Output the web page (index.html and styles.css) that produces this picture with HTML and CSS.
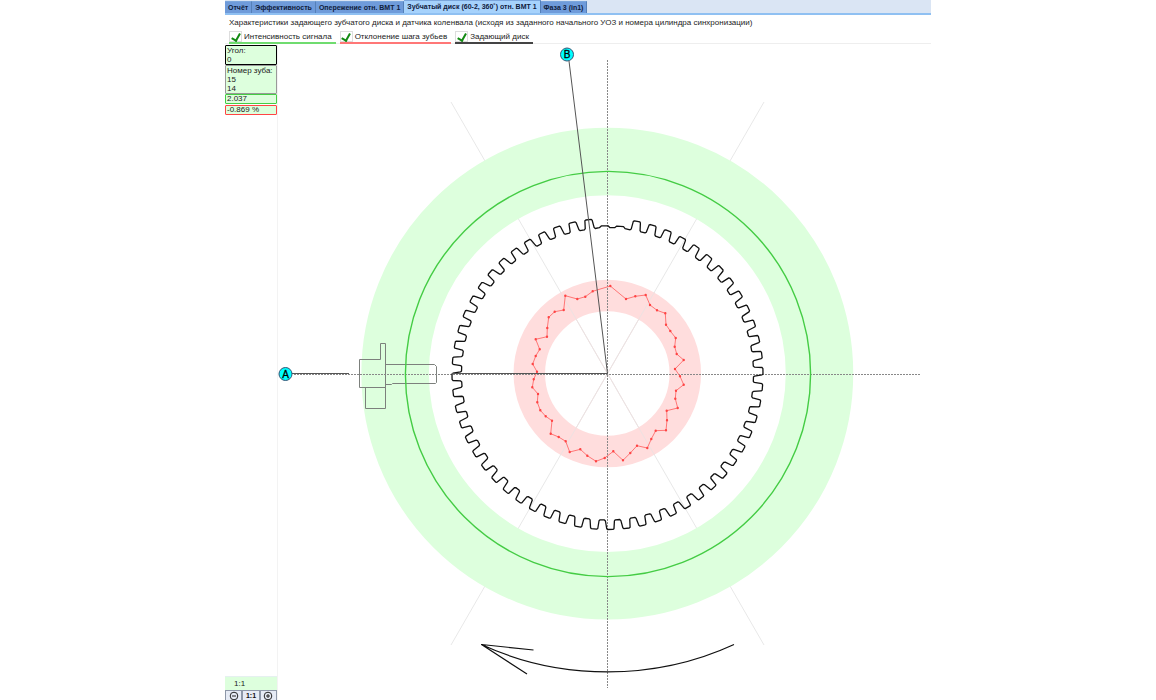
FILE: index.html
```html
<!DOCTYPE html>
<html lang="ru">
<head>
<meta charset="utf-8">
<title>Зубчатый диск</title>
<link rel="stylesheet" href="styles.css">
</head>
<body>
<main class="app">
  <nav class="tabs">
    <button class="tab" type="button">Отчёт</button>
    <button class="tab" type="button">Эффективность</button>
    <button class="tab" type="button">Опережение отн. ВМТ 1</button>
    <button class="tab tab-active" type="button">Зубчатый диск (60-2, 360˚) отн. ВМТ 1</button>
    <button class="tab" type="button">Фаза 3 (in1)</button>
  </nav>
  <header class="head">
    <p class="title">Характеристики задающего зубчатого диска и датчика коленвала (исходя из заданного начального УОЗ и номера цилиндра синхронизации)</p>
    <div class="options">
      <label class="option option-green"><input class="check" type="checkbox" checked>Интенсивность сигнала</label>
      <label class="option option-red"><input class="check" type="checkbox" checked>Отклонение шага зубьев</label>
      <label class="option option-black"><input class="check" type="checkbox" checked>Задающий диск</label>
    </div>
  </header>
  <div class="work">
    <aside class="side">
      <div class="box box-black">Угол:<br>0</div>
      <div class="box box-grey">Номер зуба:<br>15<br>14</div>
      <div class="box box-green">2.037</div>
      <div class="box box-red">-0.869 %</div>
      <div class="scale">1:1</div>
      <div class="zoom">
        <button class="zoom-button" type="button" aria-label="Уменьшить"><svg class="glyph" viewBox="0 0 10 10"><circle cx="5" cy="5" r="3.8"/><path d="M3 5h4"/></svg></button>
        <button class="zoom-button" type="button">1:1</button>
        <button class="zoom-button" type="button" aria-label="Увеличить"><svg class="glyph" viewBox="0 0 10 10"><circle cx="5" cy="5" r="3.8"/><path d="M3 5h4M5 3v4"/></svg></button>
      </div>
    </aside>
    <svg class="plot" viewBox="278 44 653 656" preserveAspectRatio="xMidYMin meet">
      <path class="spoke" d="M451 102L764 645M764 102L451 645"/>
      <circle class="ring ring-green" cx="607.3" cy="373.6" r="212.2"/>
      <circle class="ring ring-red" cx="607.3" cy="373.6" r="78"/>
      <path class="spoke spoke-soft" d="M560.5 292L654.5 455M654.5 292L560.5 455"/>
      <g class="sensor">
        <path d="M359.5 359.5H380.5V343.5H385.5V408.5H365.5V387.5M385.5 387.5H359.5V359.5"/>
        <path d="M385.5 364.5H434.5L436.5 366.5V382.5L435.5 383.5H392.5L391.5 384.5H385.5"/>
      </g>
      <path class="axis" d="M607.5 60V688M294 374.5H921"/>
      <circle class="signal" cx="608" cy="374" r="202.6"/>
      <path class="gear" id="gear"/>
      <polyline class="deviation" id="deviation"/>
      <path class="dots" id="dots"/>
      <path class="ray" d="M292 373.5H349M452 373.5H607.5L569 61"/>
      <circle class="marker" cx="285.5" cy="374" r="6.5"/>
      <text class="marker-text" x="285.5" y="378">A</text>
      <circle class="marker" cx="567" cy="54.5" r="6.5"/>
      <text class="marker-text" x="567" y="58">B</text>
      <path class="arrow" d="M481.5 644.5C560 681 655 681 734 644.5M533.5 650L481.5 644.5L527 674"/>
    </svg>
  </div>
</main>
<script src="script.js"></script>
</body>
</html>
```
FILE: styles.css
```css
* {
  box-sizing: border-box;
}

body {
  margin: 0;
  background: #fff;
  color: #222;
  font-family: "Liberation Sans", Arial, sans-serif;
  font-size: 8px;
  line-height: 9px;
  overflow: hidden;
}

button {
  font: inherit;
  color: inherit;
}

.app {
  display: flex;
  flex-direction: column;
  width: 100%;
  max-width: 706px;
  height: 100vh;
  margin: 0 auto;
}

.tabs {
  display: flex;
  align-items: flex-end;
  height: 15px;
  background: #dae5f4;
  border-bottom: 2px solid #8fc0f2;
}

.tab {
  height: 12px;
  padding: 0 3px;
  border: 0;
  border-top: 1px solid #7ba6dc;
  border-right: 1px solid #5580b8;
  background: #6f9bda;
  color: #10203c;
  font-size: 7px;
  font-weight: bold;
  line-height: 12px;
  white-space: nowrap;
}

.tab-active {
  height: 13px;
  background: #a6d2fc;
}

.head {
  height: 29px;
  padding: 3px 4px 0;
  border-bottom: 1px solid #eee;
}

.title {
  margin: 0 0 4px;
  white-space: nowrap;
}

.options {
  display: flex;
  gap: 4px;
}

.option {
  display: flex;
  align-items: center;
  gap: 2px;
  height: 13px;
  padding-right: 4px;
  border-bottom: 2px solid;
  white-space: nowrap;
}

.option-green {
  border-color: #6fdc6f;
}

.option-red {
  border-color: #f77;
}

.option-black {
  border-color: #444;
}

.check {
  appearance: none;
  display: grid;
  place-items: start center;
  width: 13px;
  height: 11px;
  margin: 0;
  border: 1px solid #ddd;
  background: #fff;
}

.check:checked::before {
  content: "";
  width: 4px;
  height: 7px;
  border: solid #128a12;
  border-width: 0 2px 2px 0;
  transform: rotate(30deg);
}

.work {
  display: flex;
  flex: 1;
  min-height: 0;
}

.side {
  display: flex;
  flex-direction: column;
  width: 53px;
  padding-top: 1px;
  border-right: 1px solid #f3f3f3;
}

.box {
  padding: 0 1px;
  border: 1px solid;
  border-radius: 1px;
  background: #dfd;
  white-space: nowrap;
}

.box-black {
  border-color: #000;
}

.box-grey {
  border-color: #999;
}

.box-green {
  margin-bottom: 1px;
  border-color: #4c4;
}

.box-red {
  border-color: #f44;
}

.box-green,
.box-red {
  height: 10px;
  line-height: 8px;
}

.scale {
  margin-top: auto;
  padding: 2px 9px;
  border-top: 1px solid #e6f0f0;
  background: #dfd;
}

.zoom {
  display: grid;
  grid-template-columns: repeat(3, 1fr);
  height: 10px;
}

.zoom-button {
  display: flex;
  justify-content: center;
  height: 10px;
  padding: 0;
  border: 1px solid #8d97a8;
  border-bottom: 0;
  background: #e6ebf5;
  color: #111;
  font-size: 7px;
  font-weight: bold;
}

.glyph {
  width: 10px;
  height: 10px;
  fill: none;
  stroke: #222;
}

.plot {
  flex: 1;
  min-width: 0;
  height: 100%;
  fill: none;
}

.ring-green {
  stroke: #dfd;
  stroke-width: 67.5;
}

.ring-red {
  stroke: #fdd;
  stroke-width: 31.5;
}

.spoke {
  stroke: #e8e8e8;
}

.spoke-soft {
  stroke: #eee2e2;
}

.sensor {
  stroke: #7c807c;
}

.axis {
  stroke: #888;
  stroke-dasharray: 2 1;
}

.signal {
  stroke: #4c4;
  stroke-width: 1.4;
}

.gear {
  stroke: #111;
  stroke-width: 1.3;
  stroke-linejoin: round;
}

.deviation {
  stroke: #f77;
}

.dots {
  stroke: #f44;
  stroke-width: 2.4;
  stroke-linecap: round;
}

.ray {
  stroke: #555;
}

.marker {
  fill: #0ff;
  stroke: #357;
}

.marker-text {
  fill: #000;
  font-size: 10px;
  stroke: #000;
  stroke-width: 0.3;
  text-anchor: middle;
}

.arrow {
  stroke: #111;
  stroke-width: 1.2;
}
```
FILE: script.js
```javascript
const CENTER = { x: 607.5, y: 374 };

// Point at a clockwise angle (degrees) and radius from the disc centre.
function polar(angle, radius) {
  const a = angle * Math.PI / 180;
  return (CENTER.x + radius * Math.cos(a)).toFixed(2) + " " +
    (CENTER.y + radius * Math.sin(a)).toFixed(2);
}

// 58 full teeth, then two missing ones drawn as shallow bumps.
const outline = [];
for (let i = 0; i < 60; i++) {
  const c = 281 + 6 * i;
  const profile = i < 58
    ? [[-2.1, 146], [-1.7, 147], [-1.4, 154.8], [-1, 155.5], [1, 155.5], [1.3, 154.5], [1.8, 147], [2.2, 146]]
    : [[-2.2, 146.5], [-1.4, 148.2], [1.2, 148.2], [1.9, 146.5]];
  for (const [offset, radius] of profile) {
    outline.push(polar(c + offset, radius));
  }
}
document.getElementById("gear").setAttribute("d", "M" + outline.join("L") + "Z");

// Tooth pitch deviation, in thirds of a plot unit from (500, 270).
const deviation = [
  [331, 48], [378, 87], [406, 79], [437, 75], [450, 105], [471, 121], [496, 130], [498, 164],
  [511, 183], [527, 204], [524, 230], [530, 252], [551, 270], [525, 297], [540, 319], [551, 344],
  [528, 362], [526, 386], [533, 414], [500, 422], [501, 451], [498, 481], [467, 482], [454, 507],
  [442, 534], [411, 527], [391, 549], [369, 571], [340, 544], [314, 564], [288, 574], [262, 557],
  [241, 538], [209, 546], [197, 514], [176, 501], [152, 491], [156, 452], [137, 439], [121, 421],
  [112, 397], [114, 372], [97, 352], [101, 328], [111, 305], [98, 282], [107, 258], [119, 238],
  [107, 208], [141, 200], [142, 174], [146, 142], [164, 125], [191, 120], [196, 77], [232, 87],
  [256, 80], [278, 64], [331, 48]
].map(([x, y]) => (500 + x / 3).toFixed(1) + " " + (270 + y / 3).toFixed(1));
document.getElementById("deviation").setAttribute("points", deviation.join(" "));
document.getElementById("dots").setAttribute("d", deviation.map(p => "M" + p + "h0").join(""));
```
